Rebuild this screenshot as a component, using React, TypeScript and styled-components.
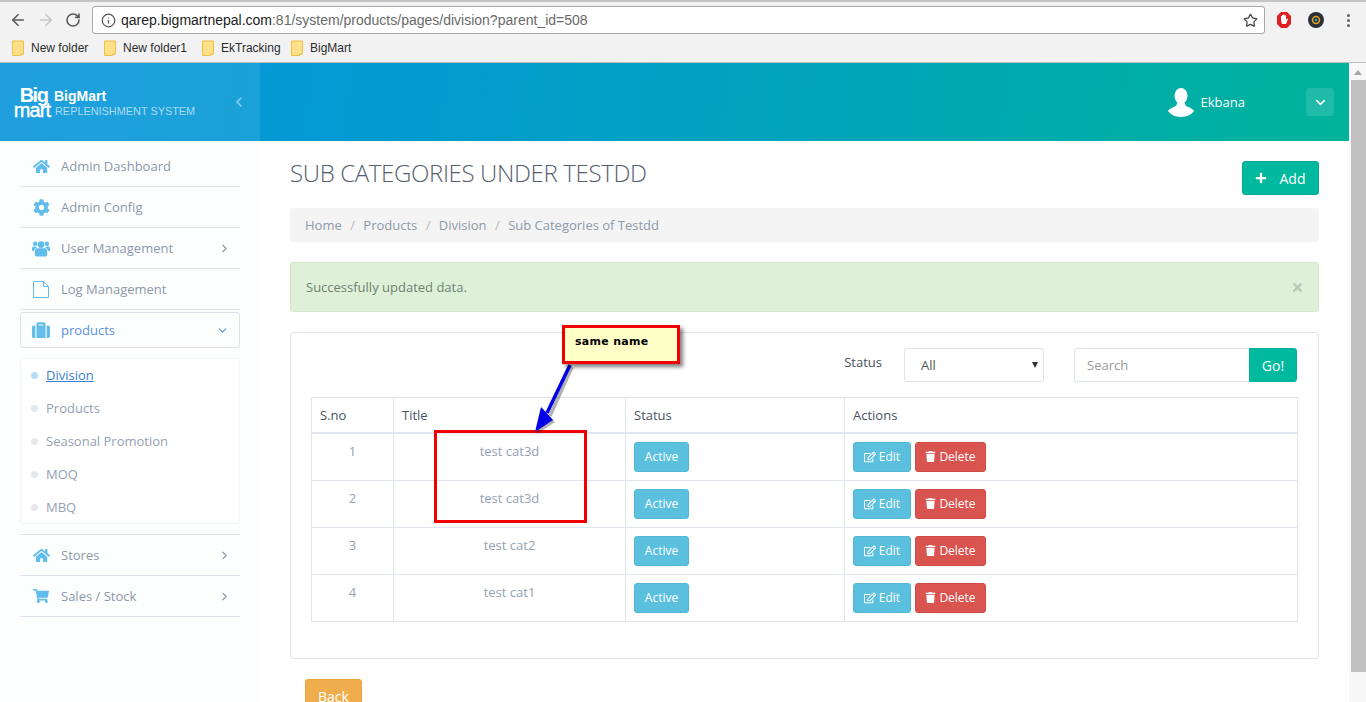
import React from "react";
import styled, { createGlobalStyle } from "styled-components";
import { ArrowLeft, ArrowRight, RotateCw, Star, ChevronLeft, ChevronRight, ChevronDown, Info } from "lucide-react";
import { FaHome, FaCog, FaSuitcase, FaShoppingCart, FaRegEdit, FaTrash, FaPlus, FaTimes } from "react-icons/fa";

const Global = createGlobalStyle`
  html, body { margin: 0; padding: 0; height: 702px; overflow: hidden; background: #fff; }
  body { font-family: "Open Sans", "Liberation Sans", sans-serif; font-size: 13px; color: #8a96a6; }
  * { box-sizing: border-box; }
`;

const Screen = styled.div`
  position: relative;
  width: 1366px;
  height: 702px;
  overflow: hidden;
  display: flex;
  flex-direction: column;
`;

const Chrome = styled.div`
  height: 63px;
  flex: none;
  background: #f2f2f2;
  border-top: 2px solid #c4c4c4;
  border-bottom: 1px solid #bdbdbd;
  display: flex;
  flex-direction: column;
`;

const Toolbar = styled.div`
  height: 32px;
  display: flex;
  align-items: center;
  padding: 4px 0 0 9px;
  color: #5f6368;
`;

const NavButton = styled.span<{ $w?: number; $dim?: boolean }>`
  width: ${(p) => p.$w ?? 28}px;
  display: flex;
  align-items: center;
  color: ${(p) => (p.$dim ? "#c4c6c8" : "#5a5a5a")};
`;

const Omnibox = styled.div`
  width: 1173px;
  height: 28px;
  margin-left: 1px;
  background: #fff;
  border: 1px solid #a9a9a9;
  border-radius: 3px;
  display: flex;
  align-items: center;
  padding: 0 6px 0 8px;
  font-family: "Liberation Sans", Arial, sans-serif;
  font-size: 14px;
  color: #6a6a6a;
`;

const UrlHost = styled.span`
  color: #222;
`;

const UrlText = styled.span`
  margin-left: 5px;
  flex: 1;
  white-space: nowrap;
`;

const ExtensionGroup = styled.div`
  display: flex;
  align-items: center;
  margin-left: 11px;
  gap: 16px;
`;

const Dots = styled.div`
  display: flex;
  flex-direction: column;
  gap: 2px;
  margin-left: 7px;
`;

const Dot = styled.i`
  width: 3px;
  height: 3px;
  border-radius: 50%;
  background: #5f6368;
  display: block;
`;

const BookmarkBar = styled.div`
  height: 26px;
  display: flex;
  align-items: center;
  padding: 1px 0 0 12px;
`;

const Bookmark = styled.div<{ $w: number }>`
  width: ${(p) => p.$w}px;
  display: flex;
  align-items: center;
  gap: 7px;
  font-family: "Liberation Sans", Arial, sans-serif;
  font-size: 12px;
  color: #2c2c2c;
`;

const Viewport = styled.div`
  flex: 1;
  min-height: 0;
  display: flex;
`;

const PageColumn = styled.div`
  width: 1349px;
  flex: none;
  display: flex;
  flex-direction: column;
`;

const Header = styled.header`
  height: 78px;
  flex: none;
  display: flex;
  background: linear-gradient(100deg, #0a96dc 0%, #029ad0 30%, #00a8b4 70%, #00b39a 100%);
`;

const Brand = styled.div`
  width: 260px;
  background: rgba(255, 255, 255, 0.09);
  display: flex;
  align-items: center;
  padding: 0 0 0 12px;
  color: #fff;
`;

const Logo = styled.div`
  width: 40px;
  font-family: "Liberation Sans", Arial, sans-serif;
  font-weight: 700;
  color: #fff;
  display: flex;
  flex-direction: column;
  align-items: center;
`;

const LogoTop = styled.span`
  font-size: 20px;
  line-height: 15px;
  height: 15px;
  letter-spacing: -1.5px;
  margin-left: 3px;
`;

const LogoBottom = styled.span`
  font-size: 20px;
  line-height: 14px;
  height: 14px;
  letter-spacing: -0.9px;
  font-weight: 400;
  -webkit-text-stroke: 0.4px #fff;
`;

const BrandText = styled.div`
  flex: 1;
  margin-left: 2px;
  padding-top: 2px;
  font-family: "Liberation Sans", Arial, sans-serif;
`;

const BrandName = styled.div`
  font-size: 14px;
  font-weight: 700;
  line-height: 15px;
`;

const BrandSub = styled.div`
  font-size: 10.9px;
  line-height: 14px;
  margin-left: 1px;
  color: #a9dcf2;
  white-space: nowrap;
`;

const Collapse = styled.span`
  display: flex;
  color: #8fd0ee;
  margin-right: 13px;
`;

const HeaderRight = styled.div`
  flex: 1;
  display: flex;
  align-items: center;
  justify-content: flex-end;
  padding-right: 15px;
  color: #fff;
`;

const UserName = styled.span`
  font-size: 13px;
  margin: 0 61px 0 7px;
`;

const HeaderToggle = styled.span`
  width: 28px;
  height: 28px;
  border-radius: 3px;
  background: rgba(255, 255, 255, 0.12);
  display: flex;
  align-items: center;
  justify-content: center;
  color: #fff;
`;

const Body = styled.div`
  flex: 1;
  display: flex;
  min-height: 0;
`;

const Sidebar = styled.nav`
  width: 260px;
  flex: none;
  padding: 5px 20px 0;
  background: #fdfefe;
`;

const NavItem = styled.div`
  height: 41px;
  border-bottom: 1px solid #e1e6ee;
  display: flex;
  align-items: center;
  padding: 0 9px 0 12px;
  color: #8c98a8;
`;

const NavIcon = styled.span`
  width: 18px;
  display: flex;
  justify-content: center;
  color: #62bdec;
  margin-right: 11px;
`;

const NavLabel = styled.span`
  flex: 1;
  white-space: nowrap;
`;

const NavOpen = styled(NavItem)`
  height: 36px;
  margin-top: 2px;
  border: 1px solid #dde2ea;
  border-radius: 3px;
  padding: 0 10px 0 11px;
  color: #5b8fe0;
`;

const SubBox = styled.div`
  margin: 10px 0;
  height: 166px;
  background: #fff;
  border: 1px solid #f3f5f8;
  border-radius: 3px;
  padding: 0 10px;
`;

const SubItem = styled.div<{ $active?: boolean }>`
  height: 33px;
  padding-bottom: 1px;
  display: flex;
  align-items: center;
  gap: 8px;
  color: ${(p) => (p.$active ? "#3b7fd0" : "#96a1b0")};
  text-decoration: ${(p) => (p.$active ? "underline" : "none")};
`;

const Bullet = styled.i<{ $active?: boolean }>`
  width: 7px;
  height: 7px;
  border-radius: 50%;
  background: ${(p) => (p.$active ? "#b6dcf6" : "#e6e8eb")};
  display: block;
  flex: none;
`;

const NavTopBorder = styled(NavItem)`
  height: 42px;
  border-top: 1px solid #e1e6ee;
`;

const Main = styled.main`
  flex: 1;
  min-width: 0;
  padding: 20px 30px 0;
  background: #fff;
`;

const TitleRow = styled.div`
  height: 34px;
  margin-bottom: 13px;
  display: flex;
  align-items: center;
  justify-content: space-between;
`;

const Title = styled.h1`
  margin: -11px 0 0;
  font-size: 24px;
  font-weight: 300;
  line-height: 30px;
  color: #55606e;
  text-transform: uppercase;
  letter-spacing: -0.35px;
`;

const AddButton = styled.button`
  width: 77px;
  height: 34px;
  border: 1px solid #0aa68f;
  border-radius: 3px;
  background: #00b99e;
  color: #fff;
  font: 14px "Open Sans", sans-serif;
  display: flex;
  align-items: center;
  justify-content: center;
  gap: 13px;
  padding: 0 1px 0 0;
`;

const Breadcrumb = styled.div`
  height: 34px;
  background: #f4f4f4;
  border-radius: 3px;
  margin-bottom: 20px;
  display: flex;
  align-items: center;
  padding-left: 15px;
  color: #8f9aa8;
`;

const Sep = styled.span`
  color: #b9b9b9;
  margin: 0 8.4px;
`;

const Alert = styled.div`
  height: 50px;
  background: #dff0d8;
  border: 1px solid #d3e8cb;
  border-radius: 3px;
  margin-bottom: 20px;
  padding: 0 14px 0 15px;
  display: flex;
  align-items: center;
  justify-content: space-between;
  color: #6f8272;
`;

const AlertClose = styled.span`
  display: flex;
  color: #bcc8bc;
`;

const Card = styled.section`
  height: 327px;
  border: 1px solid #e1e6ee;
  border-radius: 3px;
  padding: 15px 20px 0;
  margin-bottom: 20px;
`;

const FilterRow = styled.div`
  height: 34px;
  margin-bottom: 15px;
  padding-right: 1px;
  display: flex;
  justify-content: flex-end;
`;

const FilterLabel = styled.span`
  color: #4a5260;
  margin: 5px 22px 0 0;
  line-height: 18px;
`;

const SelectWrap = styled.div`
  position: relative;
  width: 140px;
  height: 34px;
  margin-right: 30px;
`;

const Select = styled.select`
  width: 100%;
  height: 100%;
  appearance: none;
  border: 1px solid #dde4ed;
  border-radius: 3px;
  background: #fff;
  padding-left: 16px;
  color: #555;
  font: 13px "Open Sans", sans-serif;
`;

const Caret = styled.i`
  position: absolute;
  right: 6px;
  top: 14px;
  width: 0;
  height: 0;
  border-left: 3.5px solid transparent;
  border-right: 3.5px solid transparent;
  border-top: 6px solid #333;
  pointer-events: none;
`;

const SearchInput = styled.input`
  width: 175px;
  height: 34px;
  border: 1px solid #dde4ed;
  border-right: 0;
  border-radius: 3px 0 0 3px;
  padding: 0 12px;
  font: 13px "Open Sans", sans-serif;
  outline: none;
  &::placeholder { color: #9a9a9a; opacity: 1; }
`;

const GoButton = styled.button`
  width: 48px;
  height: 34px;
  border: 1px solid #00b39a;
  border-radius: 0 3px 3px 0;
  background: #00b99e;
  color: #fff;
  font: 14px "Open Sans", sans-serif;
  padding: 0;
`;

const Table = styled.table`
  width: 987px;
  border-collapse: collapse;
  table-layout: fixed;
`;

const Th = styled.th<{ $w?: number }>`
  ${(p) => (p.$w ? `width: ${p.$w}px;` : "")}
  height: 35px;
  padding: 0 8px;
  border: 1px solid #e1e6ee;
  border-bottom: 2px solid #e1e6ee;
  text-align: left;
  font-weight: 400;
  font-size: 13px;
  color: #4a5260;
`;

const Td = styled.td<{ $center?: boolean }>`
  height: 47px;
  padding: ${(p) => (p.$center ? "7px 8px 8px" : "8px")};
  border: 1px solid #e1e6ee;
  vertical-align: top;
  text-align: ${(p) => (p.$center ? "center" : "left")};
  color: #95a2b2;
  line-height: 20px;
`;

const RowButtons = styled.div`
  display: flex;
  gap: 4px;
`;

const SmallButton = styled.button<{ $bg: string; $border: string; $w: number }>`
  width: ${(p) => p.$w}px;
  height: 30px;
  border: 1px solid ${(p) => p.$border};
  border-radius: 3px;
  background: ${(p) => p.$bg};
  color: #fff;
  font: 12px "Open Sans", sans-serif;
  padding: 0;
  display: flex;
  align-items: center;
  justify-content: center;
  gap: 3px;
`;

const BackButton = styled.button`
  width: 57px;
  height: 34px;
  margin-left: 15px;
  border: 1px solid #eea236;
  border-radius: 3px;
  background: #f0ad4e;
  color: #fff;
  font: 14px "Open Sans", sans-serif;
  padding: 0;
`;

const Scrollbar = styled.div`
  width: 17px;
  flex: none;
  background: #f7f7f7;
  position: relative;
  padding: 17px 0 0 2px;
`;

const ScrollUp = styled.i`
  position: absolute;
  top: 7px;
  left: 5px;
  width: 0;
  height: 0;
  border-left: 4px solid transparent;
  border-right: 4px solid transparent;
  border-bottom: 5px solid #a3a3a3;
`;

const ScrollThumb = styled.div`
  height: 592px;
  background: #c1c1c1;
`;

const Callout = styled.div`
  position: absolute;
  left: 562px;
  top: 325px;
  width: 118px;
  height: 39px;
  background: #ffffc8;
  border: 3px solid #f00000;
  box-shadow: 3px 3px 4px rgba(0, 0, 0, 0.5);
  padding: 8px 0 0 10px;
  font: bold 11px "DejaVu Sans", Verdana, sans-serif;
  line-height: 12px;
  color: #000;
  letter-spacing: 0.3px;
`;

const Highlight = styled.div`
  position: absolute;
  left: 434px;
  top: 430px;
  width: 153px;
  height: 93px;
  border: 3px solid #f00000;
`;

const ArrowSvg = styled.svg`
  position: absolute;
  left: 525px;
  top: 360px;
`;

const rows = [
  ["1", "test cat3d"],
  ["2", "test cat3d"],
  ["3", "test cat2"],
  ["4", "test cat1"],
];

const Folder = () => (
  <svg width="12" height="16" viewBox="0 0 12 16">
    <path d="M.5 1h11v13h-3v1.5h-8z" fill="#ffe08a" stroke="#f0c040" />
    <path d="M8.5 14v1.5l3-1.5z" fill="#f0c040" />
  </svg>
);

const UserGlyph = () => (
  <svg width="26" height="29" viewBox="0 0 26 29" fill="#fff">
    <ellipse cx="13" cy="8" rx="6.5" ry="8" />
    <path d="M9 15c0 2-1 3-3 4-3 1-5 2-6 4 2 3 7 6 13 6s11-3 13-6c-1-2-3-3-6-4-2-1-3-2-3-4z" />
  </svg>
);

const UsersGlyph = () => (
  <svg width="19" height="17" viewBox="0 0 19 17" fill="currentColor">
    <circle cx="9.5" cy="4.4" r="3.6" />
    <circle cx="3.3" cy="3.4" r="2.4" />
    <circle cx="15.7" cy="3.4" r="2.4" />
    <path d="M5.2 8.2h8.6c1.5 0 2.2 1.4 2.2 3.2V15c0 1.2-.9 2-2 2H5c-1.100 0-2-.8-2-2v-3.600c0-1.800.7-3.200 2.200-3.200z" />
    <path d="M0 8.400C0 7 1 6.300 2 6.300h2.500c-.2.700.1 1.200.5 1.500C3.300 8.300 2.300 9.500 2.300 11.200H1c-.6 0-1-.4-1-1z" />
    <path d="M19 8.400c0-1.400-1-2.100-2-2.100h-2.500c.2.700-.1 1.200-.5 1.500 1.700.5 2.700 1.700 2.700 3.400H18c.6 0 1-.4 1-1z" />
  </svg>
);

const FileGlyph = () => (
  <svg width="16" height="17" viewBox="0 0 16 17" fill="none" stroke="currentColor">
    <path d="M.5.500h10l5 5v11H.5z" />
    <path d="M10.500.500v5h5" />
  </svg>
);

export default function App() {
  return (
    <Screen>
      <Global />
      <Chrome>
        <Toolbar>
          <NavButton><ArrowLeft size={18} strokeWidth={2.2} /></NavButton>
          <NavButton $dim><ArrowRight size={18} strokeWidth={2.2} /></NavButton>
          <NavButton $w={26}><RotateCw size={16} strokeWidth={2.4} /></NavButton>
          <Omnibox>
            <Info size={15} color="#555" strokeWidth={2} />
            <UrlText>
              <UrlHost>qarep.bigmartnepal.com</UrlHost>:81/system/products/pages/division?parent_id=508
            </UrlText>
            <Star size={15} color="#444" strokeWidth={2} />
          </Omnibox>
          <ExtensionGroup>
            <svg width="16" height="18" viewBox="0 0 16 18">
              <path d="M5 1h6l4 4v8l-4 4H5l-4-4V5z" fill="#e02020" />
              <path d="M5 9V5h1v3-4h1.200v4-4.500h1.300V8 4.500H10V9l1-1.500 1 .5-2 5H6z" fill="#fff" />
            </svg>
            <svg width="16" height="16" viewBox="0 0 16 16">
              <circle cx="8" cy="8" r="8" fill="#2b2f36" />
              <circle cx="8" cy="8" r="3.500" fill="none" stroke="#e8a020" strokeWidth="1.500" />
              <circle cx="8" cy="8" r="1.200" fill="#28b0e0" />
            </svg>
            <Dots><Dot /><Dot /><Dot /></Dots>
          </ExtensionGroup>
        </Toolbar>
        <BookmarkBar>
          <Bookmark $w={92}><Folder />New folder</Bookmark>
          <Bookmark $w={98}><Folder />New folder1</Bookmark>
          <Bookmark $w={89}><Folder />EkTracking</Bookmark>
          <Bookmark $w={70}><Folder />BigMart</Bookmark>
        </BookmarkBar>
      </Chrome>
      <Viewport>
        <PageColumn>
          <Header>
            <Brand>
              <Logo>
                <LogoTop>Big</LogoTop>
                <LogoBottom>mart</LogoBottom>
              </Logo>
              <BrandText>
                <BrandName>BigMart</BrandName>
                <BrandSub>REPLENISHMENT SYSTEM</BrandSub>
              </BrandText>
              <Collapse><ChevronLeft size={16} strokeWidth={2.4} /></Collapse>
            </Brand>
            <HeaderRight>
              <UserGlyph />
              <UserName>Ekbana</UserName>
              <HeaderToggle><ChevronDown size={15} strokeWidth={2.6} /></HeaderToggle>
            </HeaderRight>
          </Header>
          <Body>
            <Sidebar>
              <NavItem><NavIcon><FaHome size={17} /></NavIcon><NavLabel>Admin Dashboard</NavLabel></NavItem>
              <NavItem><NavIcon><FaCog size={17} /></NavIcon><NavLabel>Admin Config</NavLabel></NavItem>
              <NavItem><NavIcon><UsersGlyph /></NavIcon><NavLabel>User Management</NavLabel><ChevronRight size={13} /></NavItem>
              <NavItem><NavIcon><FileGlyph /></NavIcon><NavLabel>Log Management</NavLabel></NavItem>
              <NavOpen><NavIcon><FaSuitcase size={18} /></NavIcon><NavLabel>products</NavLabel><ChevronDown size={13} /></NavOpen>
              <SubBox>
                <SubItem $active><Bullet $active /><span>Division</span></SubItem>
                <SubItem><Bullet /><span>Products</span></SubItem>
                <SubItem><Bullet /><span>Seasonal Promotion</span></SubItem>
                <SubItem><Bullet /><span>MOQ</span></SubItem>
                <SubItem><Bullet /><span>MBQ</span></SubItem>
              </SubBox>
              <NavTopBorder><NavIcon><FaHome size={17} /></NavIcon><NavLabel>Stores</NavLabel><ChevronRight size={13} /></NavTopBorder>
              <NavItem><NavIcon><FaShoppingCart size={16} /></NavIcon><NavLabel>Sales / Stock</NavLabel><ChevronRight size={13} /></NavItem>
            </Sidebar>
            <Main>
              <TitleRow>
                <Title>Sub Categories under testdd</Title>
                <AddButton><FaPlus size={12} />Add</AddButton>
              </TitleRow>
              <Breadcrumb>
                Home<Sep>/</Sep>Products<Sep>/</Sep>Division<Sep>/</Sep>Sub Categories of Testdd
              </Breadcrumb>
              <Alert>
                Successfully updated data.
                <AlertClose><FaTimes size={13} /></AlertClose>
              </Alert>
              <Card>
                <FilterRow>
                  <FilterLabel>Status</FilterLabel>
                  <SelectWrap>
                    <Select defaultValue="All"><option>All</option></Select>
                    <Caret />
                  </SelectWrap>
                  <SearchInput placeholder="Search" />
                  <GoButton>Go!</GoButton>
                </FilterRow>
                <Table>
                  <thead>
                    <tr>
                      <Th $w={82}>S.no</Th>
                      <Th $w={232}>Title</Th>
                      <Th $w={219}>Status</Th>
                      <Th>Actions</Th>
                    </tr>
                  </thead>
                  <tbody>
                    {rows.map(([n, t]) => (
                      <tr key={n}>
                        <Td $center>{n}</Td>
                        <Td $center>{t}</Td>
                        <Td>
                          <SmallButton $w={55} $bg="#5bc0de" $border="#52b8d6">Active</SmallButton>
                        </Td>
                        <Td>
                          <RowButtons>
                            <SmallButton $w={58} $bg="#5bc0de" $border="#52b8d6"><FaRegEdit size={12} />Edit</SmallButton>
                            <SmallButton $w={71} $bg="#d9534f" $border="#d14a46"><FaTrash size={11} />Delete</SmallButton>
                          </RowButtons>
                        </Td>
                      </tr>
                    ))}
                  </tbody>
                </Table>
              </Card>
              <BackButton>Back</BackButton>
            </Main>
          </Body>
        </PageColumn>
        <Scrollbar>
          <ScrollUp />
          <ScrollThumb />
        </Scrollbar>
      </Viewport>
      <Highlight />
      <ArrowSvg width="60" height="80" viewBox="0 0 60 80">
        <path d="M47 7 L25 56" stroke="#000" strokeOpacity=".3" strokeWidth="3.500" />
        <path d="M12 74l6-25 12 13z" fill="#000" fillOpacity=".3" />
        <path d="M45 5 L22 53" stroke="#0000e8" strokeWidth="3.500" />
        <path d="M10 72l6-25 12 13z" fill="#0000e8" />
      </ArrowSvg>
      <Callout>same name</Callout>
    </Screen>
  );
}
